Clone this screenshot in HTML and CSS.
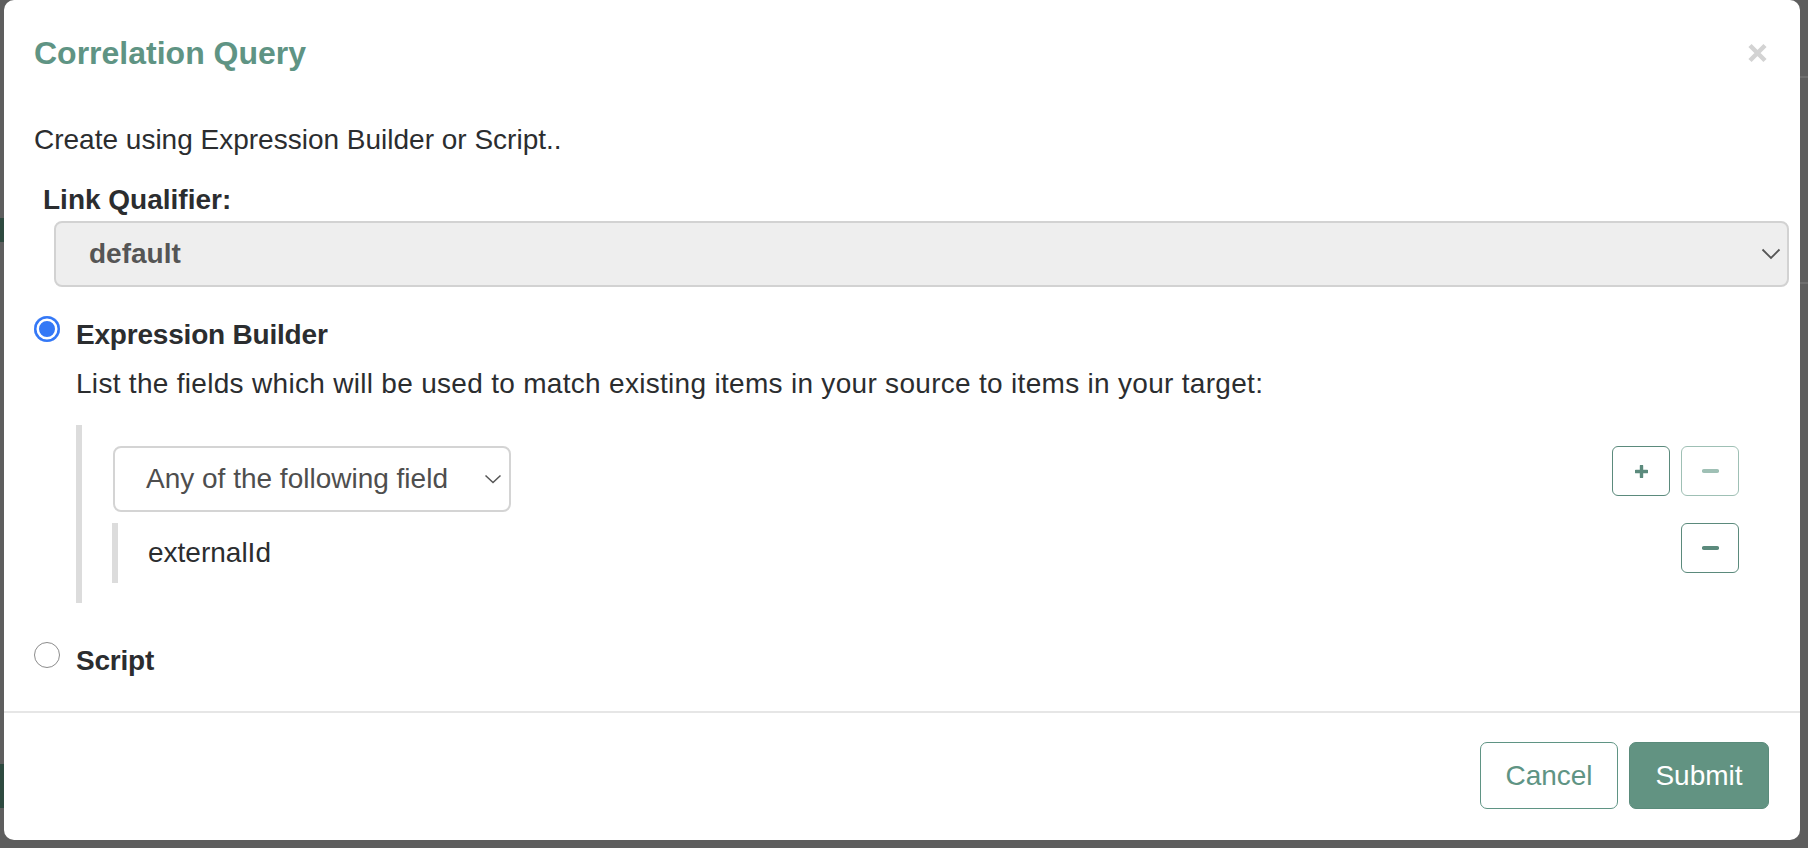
FILE: index.html
```html
<!DOCTYPE html>
<html lang="en">
<head>
<meta charset="utf-8">
<title>Correlation Query</title>
<link rel="stylesheet" href="styles.css">
</head>
<body>
<div class="backdrop">
  <div class="modal">
    <div class="modal-header">
      <h5 class="modal-title">Correlation Query</h5>
      <button class="close" aria-label="Close">
        <svg width="21" height="20" viewBox="0 0 21 20"><path d="M3 2.5 L18 17.5 M18 2.5 L3 17.5" stroke="#d3d3d3" stroke-width="4.5" fill="none"/></svg>
      </button>
    </div>
    <div class="modal-body">
      <p class="intro">Create using Expression Builder or Script..</p>
      <label class="qual-label">Link Qualifier:</label>
      <div class="select select-lg">
        <span>default</span>
        <svg width="20" height="12" viewBox="0 0 20 12"><path d="M1.5 1.5 L10 10 L18.5 1.5" stroke="#555" stroke-width="1.8" fill="none"/></svg>
      </div>
      <div class="radio-row">
        <span class="radio checked"></span>
        <span class="radio-label">Expression Builder</span>
      </div>
      <div class="builder">
        <p class="hint">List the fields which will be used to match existing items in your source to items in your target:</p>
        <div class="group">
          <div class="row">
            <div class="select select-sm">
              <span class="opt">Any of the following field</span>
              <svg width="18" height="10" viewBox="0 0 18 10"><path d="M1.5 1.5 L9 8.5 L16.5 1.5" stroke="#555" stroke-width="1.5" fill="none"/></svg>
            </div>
            <div class="btns">
              <button class="icon-btn" aria-label="Add">
                <svg width="13" height="13" viewBox="0 0 13 13"><path d="M6.5 1 V12 M1 6.5 H12" stroke="currentColor" stroke-width="3.4" stroke-linecap="round" fill="none"/></svg>
              </button>
              <button class="icon-btn disabled" aria-label="Remove">
                <svg width="17" height="6" viewBox="0 0 17 6"><path d="M2 3 H15" stroke="currentColor" stroke-width="4.2" stroke-linecap="round" fill="none"/></svg>
              </button>
            </div>
          </div>
          <div class="row row2">
            <div class="field">externalId</div>
            <button class="icon-btn" aria-label="Remove">
              <svg width="17" height="6" viewBox="0 0 17 6"><path d="M2 3 H15" stroke="currentColor" stroke-width="4.2" stroke-linecap="round" fill="none"/></svg>
            </button>
          </div>
        </div>
      </div>
      <div class="radio-row script-row">
        <span class="radio"></span>
        <span class="radio-label">Script</span>
      </div>
    </div>
    <div class="modal-footer">
      <button class="btn btn-outline">Cancel</button>
      <button class="btn btn-primary">Submit</button>
    </div>
  </div>
</div>
</body>
</html>
```
FILE: styles.css
```css
html, body {
  margin: 0;
  padding: 0;
}

body {
  background-color: #5e5e5e;
  background-image:
    linear-gradient(#2e4a40, #2e4a40),
    linear-gradient(#2e4a40, #2e4a40),
    linear-gradient(#6e6e6e, #6e6e6e),
    linear-gradient(#6e6e6e, #6e6e6e);
  background-repeat: no-repeat;
  background-size: 4px 24px, 4px 44px, 8px 2px, 8px 2px;
  background-position: 0 218px, 0 764px, 1800px 76px, 1800px 282px;
  font-family: "Liberation Sans", Arial, sans-serif;
  color: #2b2d2f;
}

.backdrop {
  width: 1808px;
  height: 848px;
  box-sizing: border-box;
  padding: 0 8px 8px 4px;
}

.modal {
  background: #fff;
  height: 840px;
  border-radius: 10px;
  display: flex;
  flex-direction: column;
}

.modal-header {
  display: flex;
  align-items: center;
  justify-content: space-between;
  padding: 34px 32px 0 30px;
  height: 38px;
}

.modal-title {
  margin: 0;
  font-size: 32px;
  line-height: 38px;
  font-weight: 700;
  color: #5f9484;
}

.close {
  border: 0;
  background: none;
  padding: 0;
  width: 21px;
  height: 20px;
  display: block;
}

.close svg {
  display: block;
}

.modal-body {
  flex: 1;
  padding: 0 11px 0 30px;
  font-size: 28px;
  line-height: 40px;
}

.intro {
  margin: 48px 0 0;
}

.qual-label {
  display: block;
  margin: 20px 0 0 9px;
  font-weight: 700;
}

.select {
  display: flex;
  align-items: center;
  justify-content: space-between;
  box-sizing: border-box;
  height: 66px;
  border-radius: 8px;
  color: #555;
}

.select svg {
  display: block;
  flex: none;
}

.select-lg {
  margin: 1px 0 0 20px;
  border: 2px solid #d2d2d2;
  background: #eeeeee;
  padding: 0 6px 0 33px;
  font-weight: 700;
}

.radio-row {
  display: flex;
  align-items: flex-start;
  margin-top: 28px;
  font-weight: 700;
}

.radio-label {
  letter-spacing: -0.2px;
}

.radio {
  width: 26px;
  height: 26px;
  border-radius: 50%;
  box-sizing: border-box;
  margin: 1px 16px 0 0;
  flex: none;
  border: 1.5px solid #8c8c8c;
  background: #fff;
}

.radio.checked {
  border: 0;
  background: #3478f6;
  box-shadow: inset 0 0 0 2.5px #3478f6, inset 0 0 0 5px #fff;
}

.builder {
  margin-left: 42px;
}

.hint {
  margin: 9px 0 0;
  letter-spacing: 0.3px;
}

.group {
  margin: 21px 50px 0 0;
  border-left: 6px solid #dcdcdc;
  padding: 21px 0 20px 31px;
}

.row {
  display: flex;
  justify-content: space-between;
  align-items: flex-start;
}

.row2 {
  margin: 11px 0 0 -1px;
}

.select-sm {
  width: 398px;
  border: 2px solid #d4d4d4;
  background: #fff;
  padding: 0 7px 0 31px;
  color: #4e4e4e;
}

.opt {
  white-space: nowrap;
}

.btns {
  display: flex;
  gap: 11px;
}

.icon-btn {
  width: 58px;
  height: 50px;
  box-sizing: border-box;
  border: 1.5px solid #5b8a7c;
  border-radius: 6px;
  background: #fff;
  display: flex;
  align-items: center;
  justify-content: center;
  padding: 0;
  color: #5b8a7c;
}

.icon-btn svg {
  display: block;
}

.icon-btn.disabled {
  border-color: #9fc0b5;
  color: #9fc0b5;
}

.field {
  border-left: 6px solid #dcdcdc;
  height: 60px;
  display: flex;
  align-items: center;
  padding-left: 30px;
}

.script-row {
  margin-top: 38px;
}

.modal-footer {
  border-top: 2px solid #e6e6e6;
  padding: 29px 31px 31px;
  display: flex;
  justify-content: flex-end;
  gap: 11px;
}

.btn {
  height: 67px;
  font-size: 28px;
  font-family: inherit;
  border-radius: 7px;
  padding: 0;
  box-sizing: border-box;
}

.btn-outline {
  width: 138px;
  border: 1.5px solid #5f9484;
  background: #fff;
  color: #5f9484;
}

.btn-primary {
  width: 140px;
  border: 1.5px solid #5a8b7b;
  background: #629382;
  color: #fff;
}
```
